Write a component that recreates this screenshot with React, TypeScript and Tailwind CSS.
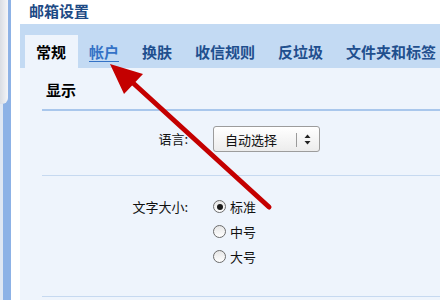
import React from "react";

const font = { fontFamily: '"Noto Sans CJK SC", "Noto Sans", sans-serif' };

function Radio({ checked, label }: { checked?: boolean; label: string }) {
  return (
    <div className="flex items-center h-[25px]">
      <span className="w-[13px] h-[13px] rounded-full border border-[#6b6b6b] bg-gradient-to-b from-[#e6e6e6] to-white flex items-center justify-center">
        {checked && <span className="w-[6px] h-[6px] rounded-full bg-[#1a1a1a]" />}
      </span>
      <span className="ml-[4px] text-[13px] text-[#111] leading-none">{label}</span>
    </div>
  );
}

export default function App() {
  const tabs = ["帐户", "换肤", "收信规则", "反垃圾", "文件夹和标签"];
  return (
    <div className="w-[440px] h-[300px] bg-white flex relative overflow-hidden" style={font}>
      {/* left strip */}
      <div className="w-[11px] h-full bg-[#8db2e6] flex flex-col shrink-0">
        <div className="w-[8px] h-[104px] rounded-br-[6px] bg-gradient-to-r from-[#d9dde4] to-[#f4f5f8]" />
        <div className="w-[3px] flex-1 bg-[#dfe7f3]" />
      </div>
      <div className="w-[9px] shrink-0" />
      {/* main */}
      <div className="flex-1 flex flex-col min-w-0">
        <div className="h-[24px] pl-[9px] pt-[3px] flex items-start leading-none">
          <span className="text-[15px] font-bold text-[#1d4a85] leading-none">邮箱设置</span>
        </div>
        <div className="h-[44px] bg-[#c3daf3] flex items-end pl-[5px] whitespace-nowrap">
          <div className="h-[33px] bg-[#eef4fc] pl-[11px] pr-[12px] flex items-center">
            <span className="text-[15px] font-bold text-black leading-none">常规</span>
          </div>
          {tabs.map((t, i) => (
            <div key={t} className="h-[33px] pl-[11px] pr-[12px] flex items-center">
              {i === 0 ? (
                <span className="text-[15px] font-bold text-[#3472c6] leading-none border-b border-[#3472c6] pb-[2px] mt-[3px]">
                  {t}
                </span>
              ) : (
                <span className="text-[15px] font-bold text-[#1f4f8e] leading-none">{t}</span>
              )}
            </div>
          ))}
        </div>
        <div className="flex-1 bg-[#eef4fc] pl-[22px]">
          <div className="h-[43px] border-b-2 border-[#a9c7ec] flex items-center pl-[4px] pt-[2px]">
            <span className="text-[15px] font-bold text-black leading-none">显示</span>
          </div>
          <div className="h-[65px] border-b border-[#c6d9f0] flex items-start pt-[15px]">
            <div className="w-[146px] h-[26px] flex items-center justify-end text-[13px] text-[#111]">语言:</div>
            <div className="ml-[25px] w-[107px] h-[26px] rounded-[3px] border border-[#9c9c9c] bg-gradient-to-b from-white to-[#ececec] flex items-center pl-[11px] relative">
              <span className="text-[13px] text-[#111] leading-none">自动选择</span>
              <span className="absolute left-[82px] top-[6px] w-px h-[14px] bg-[#9a9a9a]" />
              <svg className="absolute left-[90px] top-[7px]" width="7" height="11" viewBox="0 0 7 11">
                <path d="M3.5 0.5 L6.5 4 L0.5 4 Z" fill="#222" />
                <path d="M0.5 7 L6.5 7 L3.5 10.5 Z" fill="#222" />
              </svg>
            </div>
          </div>
          <div className="h-[121px] border-b border-[#c6d9f0] flex items-start pt-[18px]">
            <div className="w-[146px] h-[25px] flex items-center justify-end text-[13px] text-[#111]">文字大小:</div>
            <div className="ml-[25px] flex flex-col">
              <Radio checked label="标准" />
              <Radio label="中号" />
              <Radio label="大号" />
            </div>
          </div>
        </div>
      </div>
      {/* red arrow overlay */}
      <svg className="absolute left-0 top-0 pointer-events-none" width="440" height="300" viewBox="0 0 440 300">
        <line x1="132" y1="82" x2="269" y2="207" stroke="#c40000" strokeWidth="5" strokeLinecap="round" />
        <polygon points="110,64 143,74 124,94" fill="#c40000" />
      </svg>
    </div>
  );
}
